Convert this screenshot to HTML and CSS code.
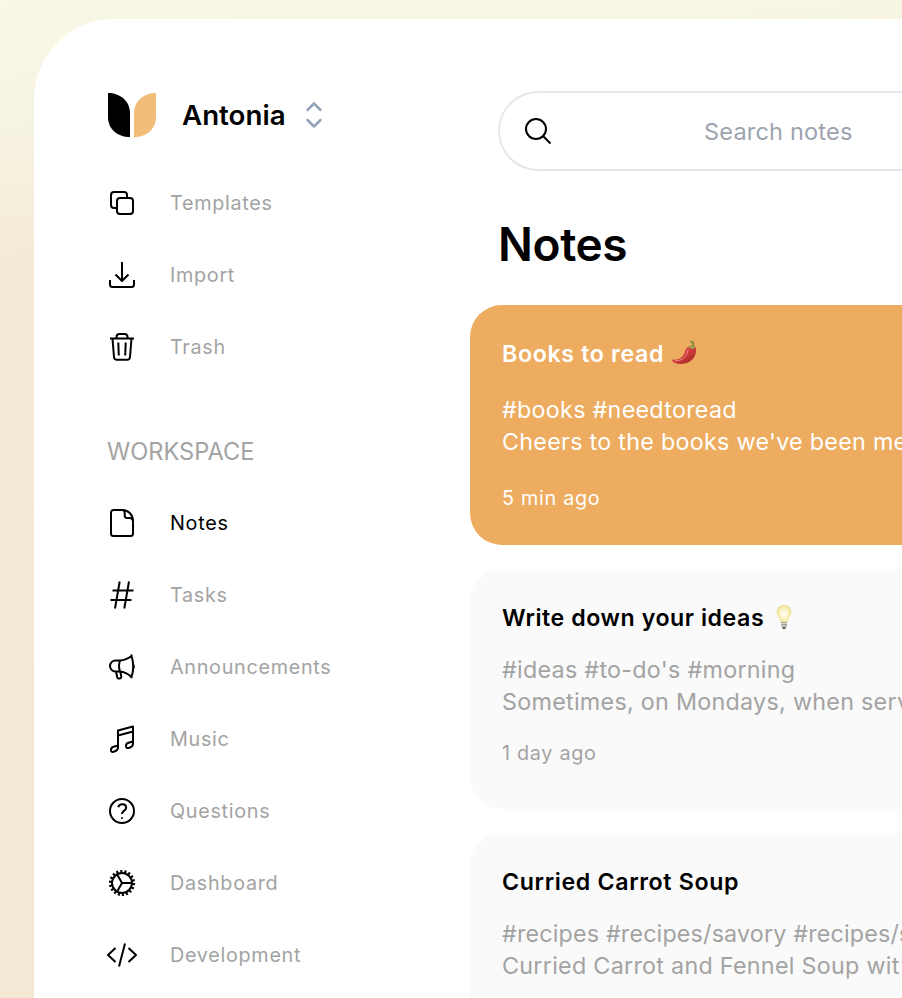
FILE: index.html
```html
<!DOCTYPE html>
<html lang="en">
<head>
<meta charset="utf-8">
<title>Notes</title>
<link rel="stylesheet" href="styles.css">
</head>
<body>
<div class="window">
  <aside class="sidebar">
    <div class="account">
      <svg class="logo" width="50" height="46" viewBox="0 0 50 46"><path d="M1 1c12 0 22 8 22 20v24C10 45 1 37 1 25z" fill="#000"/><path d="M49 1C37 1 27 9 27 21v24c13 0 22-8 22-20z" fill="#f2bd78"/></svg>
      <span class="account-name">Antonia</span>
      <svg class="chevrons" width="18" height="28" viewBox="0 0 18 28"><path d="M2.500 9L9 2.500 15.500 9M2.500 19L9 25.500l6.500-6.500"/></svg>
    </div>
    <nav class="menu">
      <a class="item"><svg class="icon" viewBox="0 0 32 32"><rect x="11" y="11" width="16" height="16" rx="3"/><path d="M11 21H8a3 3 0 0 1-3-3V8a3 3 0 0 1 3-3h10a3 3 0 0 1 3 3v3"/></svg><span class="label">Templates</span></a>
      <a class="item"><svg class="icon" viewBox="0 0 32 32"><path d="M16 3v19M9.500 15.500l6.500 6.500 6.500-6.500M4 21v4.500A2.500 2.500 0 0 0 6.500 28h19a2.500 2.500 0 0 0 2.500-2.500V21"/></svg><span class="label">Import</span></a>
      <a class="item"><svg class="icon" viewBox="0 0 32 32"><path d="M4 7.500h24M6.500 7.500l1.500 18.500a3 3 0 0 0 3 2.800h10a3 3 0 0 0 3-2.800l1.500-18.500M10.500 7V6A3 3 0 0 1 13.500 3h5a3 3 0 0 1 3 3v1M12.300 11.500l.5 13M19.700 11.500l-.5 13"/></svg><span class="label">Trash</span></a>
    </nav>
    <h2 class="section">WORKSPACE</h2>
    <nav class="menu">
      <a class="item active"><svg class="icon" viewBox="0 0 32 32"><path d="M16.500 3H7.500A2.500 2.500 0 0 0 5 5.500v21A2.500 2.500 0 0 0 7.500 29h17a2.500 2.500 0 0 0 2.500-2.500V14C27 8 22.500 3 16.500 3q2.200.3 2.200 3v2.500a2.500 2.500 0 0 0 2.500 2.500H23.500q3 0 3.500 3"/></svg><span class="label">Notes</span></a>
      <a class="item"><svg class="icon" viewBox="0 0 32 32"><path d="M13.700 2.500L9 29.500M23 2.500l-4.700 27M6.500 11.500h21M4.500 21h21"/></svg><span class="label">Tasks</span></a>
      <a class="item"><svg class="icon" viewBox="0 0 32 32"><path d="M14 9.500H9.500a5.500 5.500 0 0 0 0 11H14M14 9.500q6-.3 11.500-4.500 3.500 10.500 0 21-5.500-5-11.500-5.500-2-5.500 0-11M25.500 5V3.500M25.500 26v1.200M27 13.500q1.700 2 0 4.500M10 20.500l1.200 5.500q.5 2 2.500 1.500 2-.5 1.500-2.500l-1-4.500"/></svg><span class="label">Announcements</span></a>
      <a class="item"><svg class="icon" viewBox="0 0 32 32"><path d="M12 24V7.500L27 3.500V21M12 12.500l15-4M12 22.500v1.800q0 3-3 4l-1.500.5Q5 29.500 5 27t2.500-3.200zM27 18.500v2q0 3-3 4l-1.500.500Q20 25.500 20 23t2.500-3.200z"/></svg><span class="label">Music</span></a>
      <a class="item"><svg class="icon" viewBox="0 0 32 32"><circle cx="16" cy="16" r="12"/><path d="M12.300 12.200C13 8.500 20 8.200 20.200 12.500c0 3.300-4.100 3-4.200 6.500"/><circle class="dot" cx="16" cy="23" r="1"/></svg><span class="label">Questions</span></a>
      <a class="item"><svg class="icon" viewBox="0 0 32 32"><circle cx="16" cy="16" r="10"/><circle class="teeth" cx="16" cy="16" r="11.700"/><path d="M16 16h10M16 16l-5-8.700M16 16l-5 8.700"/></svg><span class="label">Dashboard</span></a>
      <a class="item"><svg class="icon" viewBox="0 0 32 32"><path d="M9.500 9l-7.500 7 7.500 7M22.500 9l7.500 7-7.500 7M19 4.500l-6 23"/></svg><span class="label">Development</span></a>
    </nav>
  </aside>
  <main class="content">
    <div class="search">
      <svg class="search-icon" width="28" height="28" viewBox="0 0 28 28"><circle cx="12" cy="12" r="10"/><path d="M19 19l7.500 7.500"/></svg>
      <span class="placeholder">Search notes</span>
    </div>
    <h1 class="heading">Notes</h1>
    <div class="cards">
      <article class="card featured">
        <h3 class="title">Books to read <svg class="emoji" width="26" height="26" viewBox="0 0 26 26"><defs><linearGradient id="pepper" x1="0" y1="0" x2="1" y2="1"><stop offset="0" stop-color="#e96563"/><stop offset=".5" stop-color="#d43c3d"/><stop offset="1" stop-color="#8d2420"/></linearGradient></defs><path d="M17 7c2-2 7-2 8 1 1 8-4 15-14 16C6 24.500 1 22.500.8 19.500 9 21 13 16 14 11c.5-2 1-3 3-4z" fill="url(#pepper)"/><path d="M4 20.700c7 .5 12-4 13-11" fill="none" stroke="#ef8b86" stroke-width="1"/><path d="M16 7.500C18 5 24 5 25 8.500l-2-.5-2 1-2-1.500z" fill="#9dac4d"/><path d="M22 6.500c1-2.500.5-4.500-2.500-5" fill="none" stroke="#718d36" stroke-width="1.800"/></svg></h3>
        <p class="text">#books #needtoread<br>Cheers to the books we've been me</p>
        <time class="time">5 min ago</time>
      </article>
      <article class="card">
        <h3 class="title ideas">Write down your ideas <svg class="emoji" width="26" height="26" viewBox="0 0 26 26"><defs><radialGradient id="glow"><stop offset="0" stop-color="#fffef4"/><stop offset=".55" stop-color="#fdf5c8"/><stop offset="1" stop-color="#f0df94"/></radialGradient></defs><path d="M13 1c4.500 0 7.300 3.200 7.300 7 0 4.500-3.300 6-3.800 10.500h-7C9 14 5.700 12.500 5.700 8 5.700 4.200 8.500 1 13 1z" fill="url(#glow)"/><path d="M10 18h6v3.500l-1.500 3h-3l-1.500-3z" fill="#a8a59b"/><path d="M10 19.500h6M10 22h5.500" stroke="#dedbd0"/><path d="M11.500 24h3" stroke="#504e49" stroke-width="1.500"/></svg></h3>
        <p class="text">#ideas #to-do's #morning<br>Sometimes, on Mondays, when serv</p>
        <time class="time">1 day ago</time>
      </article>
      <article class="card">
        <h3 class="title">Curried Carrot Soup</h3>
        <p class="text"><span class="tags">#recipes #recipes/savory #recipes/s</span><br>Curried Carrot and Fennel Soup wit</p>
      </article>
    </div>
  </main>
</div>
</body>
</html>
```

FILE: styles.css
```css
* { box-sizing: border-box; }
html { overflow: hidden; }
body {
  margin: 0;
  height: 998px;
  overflow: hidden;
  padding: 19px 0 0 34px;
  background: linear-gradient(175deg, #f9f8e5 0%, #f7f4e3 9%, #f6f1de 15%, #f4ead6 25%, #f4e9d5 60%, #f4e8d5 100%);
  font-family: Inter, "Liberation Sans", sans-serif;
  color: #000;
}
h1, h2, h3, p { margin: 0; }
.window {
  height: 979px;
  display: flex;
  overflow: hidden;
  background: #fff;
  border-radius: 80px 0 0 0;
}
.sidebar { width: 436px; padding: 72px 0 0 72px; flex: none; }
.account { display: flex; align-items: center; height: 48px; padding-left: 1px; }
.account-name { margin-left: 25px; width: 104px; font-size: 27.700px; font-weight: 600; white-space: nowrap; }
.chevrons { margin-left: 19px; fill: none; stroke: #94a3b8; stroke-width: 2.500; stroke-linecap: round; stroke-linejoin: round; }
.menu { display: flex; flex-direction: column; }
.account + .menu { margin-top: 28px; }
.item { display: flex; align-items: center; height: 72px; color: #a3a3a3; }
.item.active { color: #000; }
.icon { width: 32px; height: 32px; flex: none; fill: none; stroke: #000; stroke-width: 2; stroke-linejoin: round; }
.dot { fill: #000; stroke: none; }
.teeth { stroke-width: 2.800; stroke-dasharray: 2.040 2.043; }
.label { margin-left: 32px; font-size: 19.800px; letter-spacing: .7px; white-space: nowrap; }
.section { margin: 53px 0 19px 1px; font-size: 23.600px; line-height: 32px; font-weight: 400; color: #a3a3a3; }
.content { flex: 1; min-width: 0; padding-top: 72px; }
.search {
  display: flex;
  align-items: center;
  height: 80px;
  margin-left: 28px;
  padding-left: 24px;
  border: 2px solid #e5e7eb;
  border-right: 0;
  border-radius: 40px 0 0 40px;
}
.search-icon { fill: none; stroke: #000; stroke-width: 2; }
.placeholder { margin-left: 152px; font-size: 23.500px; letter-spacing: .2px; color: #9ca3af; }
.heading { margin: 42px 0 30px 28px; font-size: 46px; line-height: 62px; font-weight: 600; letter-spacing: -.4px; }
.cards { display: flex; flex-direction: column; gap: 24px; }
.card { height: 240px; flex: none; padding: 33px 0 0 32px; border-radius: 32px 0 0 32px; background: #fafafa; color: #a3a3a3; white-space: nowrap; overflow: hidden; }
.title { font-size: 23.200px; line-height: 32px; font-weight: 600; letter-spacing: .65px; color: #000; }
.ideas { letter-spacing: .55px; }
.text { margin-top: 20px; font-size: 23.300px; line-height: 32px; letter-spacing: .28px; }
.tags { letter-spacing: .17px; }
.time { display: block; margin-top: 21px; font-size: 19.800px; line-height: 28px; letter-spacing: .7px; }
.featured, .featured .title { background: #edac5f; color: #fff; }
.featured .text { margin-top: 24px; }
.featured .time { margin-top: 26px; }
.emoji { vertical-align: -4px; }
```
